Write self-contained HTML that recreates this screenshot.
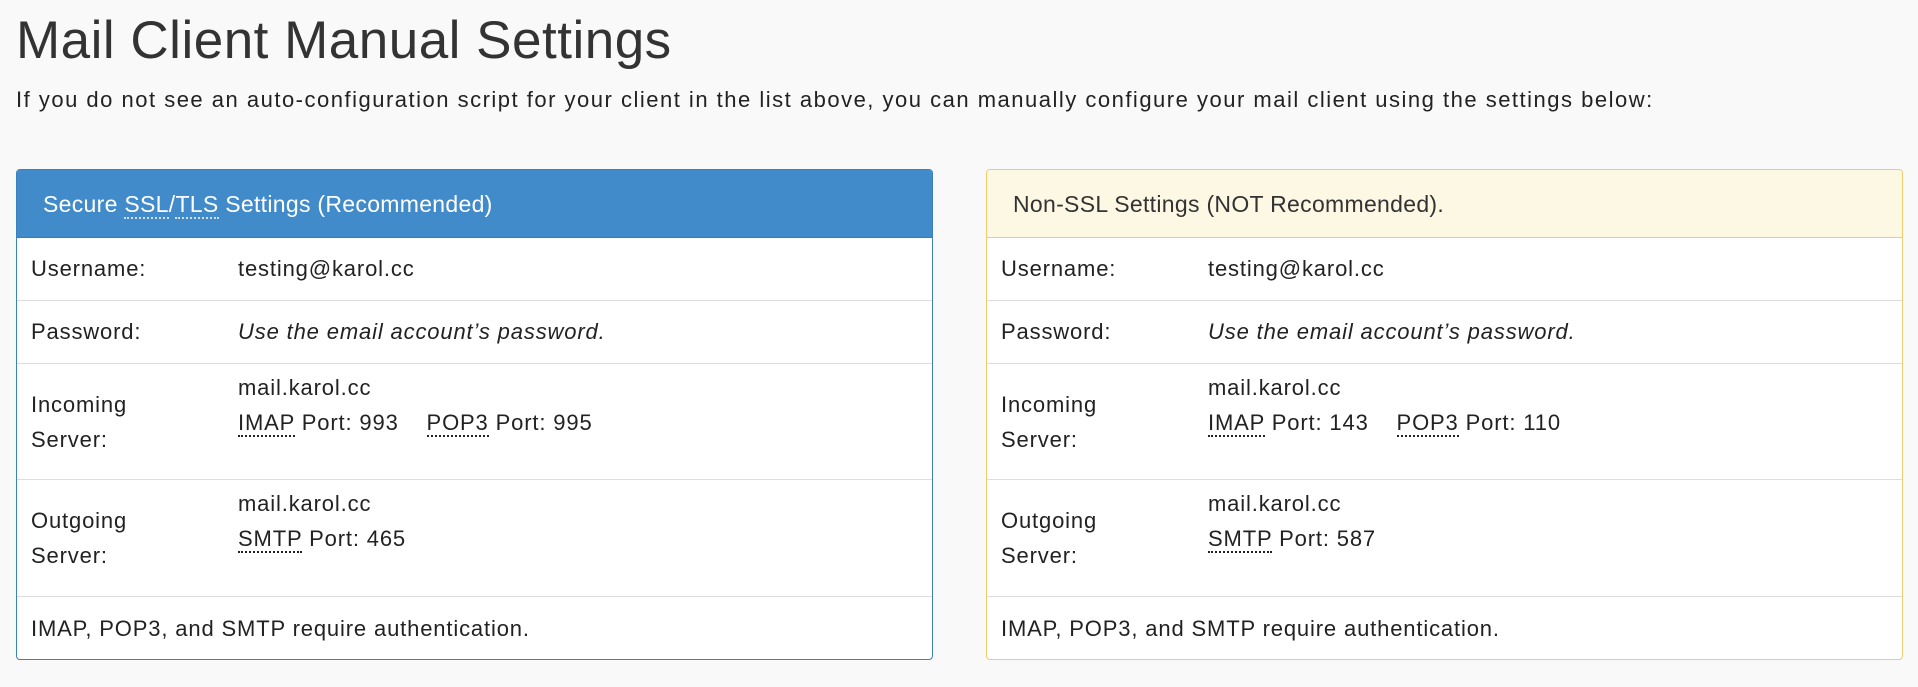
<!DOCTYPE html>
<html><head><style>
body{margin:0;background:#f9f9f9;font-family:"Liberation Sans",sans-serif;color:#222;width:1918px;height:687px;overflow:hidden;position:relative}
h1{position:absolute;left:16px;top:10px;margin:0;font-weight:normal;font-size:53px;color:#333;letter-spacing:0.5px}
.sub{position:absolute;left:16px;top:87px;font-size:22px;letter-spacing:1.5px;color:#222;margin:0}
.panel{position:absolute;top:169px;height:491px;width:917px;border:1px solid;border-radius:4px;background:#fff;overflow:hidden;box-sizing:border-box}
.p1{left:16px;border-color:#3d80bf}
.p2{left:986px;border-color:#f2cb6d}
.hd{height:68px;box-sizing:border-box;padding-left:26px;line-height:68px;font-size:23px;letter-spacing:0.3px}
.p1 .hd{background:#428bca;color:#fff;border-bottom:1px solid #3a7cbb}
.p2 .hd{background:#fcf8e3;color:#333;border-bottom:1px solid #f2cb6d}
.row{position:relative;border-bottom:1px solid #ddd;font-size:22px;letter-spacing:0.85px;box-sizing:border-box}
.row .l{position:absolute;left:14px}
.row .v{position:absolute;left:221px}
abbr{text-decoration:none;border-bottom:2px dotted currentColor}
.p1 .hd abbr{border-bottom-color:#cfe0f2}
</style></head><body>
<h1>Mail Client Manual Settings</h1>
<p class="sub">If you do not see an auto-configuration script for your client in the list above, you can manually configure your mail client using the settings below:</p>

<div class="panel p1">
<div class="hd">Secure <abbr>SSL</abbr>/<abbr>TLS</abbr> Settings (Recommended)</div>
<div class="row" style="height:63px"><span class="l" style="top:18px">Username:</span><span class="v" style="top:18px">testing@karol.cc</span></div>
<div class="row" style="height:63px"><span class="l" style="top:18px">Password:</span><span class="v" style="top:18px;font-style:italic">Use the email account’s password.</span></div>
<div class="row" style="height:116px;line-height:35px"><span class="l" style="top:23px">Incoming<br>Server:</span><span class="v" style="top:6px">mail.karol.cc<br><abbr>IMAP</abbr> Port: 993 &nbsp;&nbsp; <abbr>POP3</abbr> Port: 995</span></div>
<div class="row" style="height:117px;line-height:35px"><span class="l" style="top:23px">Outgoing<br>Server:</span><span class="v" style="top:6px">mail.karol.cc<br><abbr>SMTP</abbr> Port: 465</span></div>
<div class="row" style="height:63px;border:none"><span class="l" style="top:19px">IMAP, POP3, and SMTP require authentication.</span></div>
</div>

<div class="panel p2">
<div class="hd">Non-SSL Settings (NOT Recommended).</div>
<div class="row" style="height:63px"><span class="l" style="top:18px">Username:</span><span class="v" style="top:18px">testing@karol.cc</span></div>
<div class="row" style="height:63px"><span class="l" style="top:18px">Password:</span><span class="v" style="top:18px;font-style:italic">Use the email account’s password.</span></div>
<div class="row" style="height:116px;line-height:35px"><span class="l" style="top:23px">Incoming<br>Server:</span><span class="v" style="top:6px">mail.karol.cc<br><abbr>IMAP</abbr> Port: 143 &nbsp;&nbsp; <abbr>POP3</abbr> Port: 110</span></div>
<div class="row" style="height:117px;line-height:35px"><span class="l" style="top:23px">Outgoing<br>Server:</span><span class="v" style="top:6px">mail.karol.cc<br><abbr>SMTP</abbr> Port: 587</span></div>
<div class="row" style="height:63px;border:none"><span class="l" style="top:19px">IMAP, POP3, and SMTP require authentication.</span></div>
</div>
</body></html>
